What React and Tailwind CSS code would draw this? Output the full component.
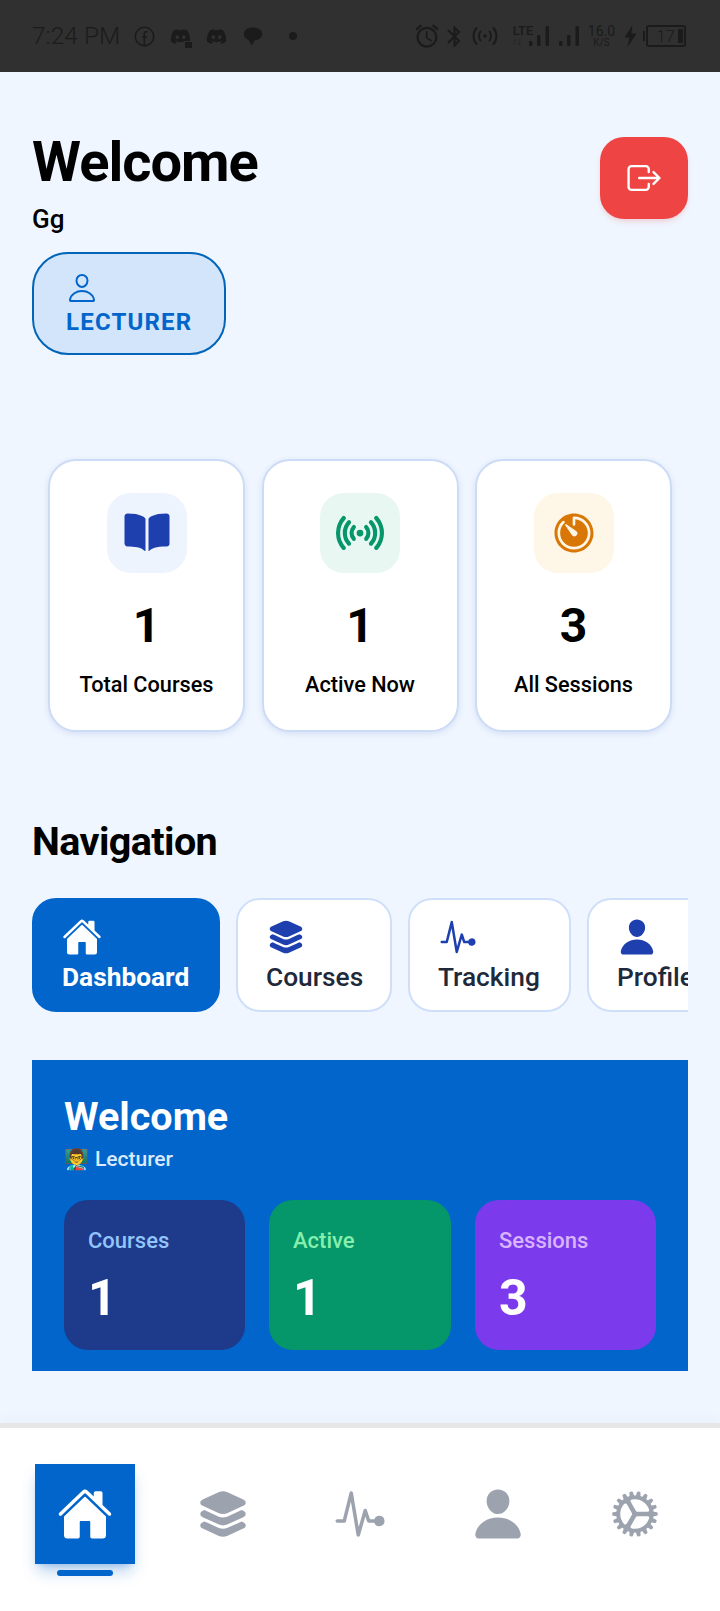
import React from 'react';
import {
  IoBook,
  IoCog,
  IoExitOutline,
  IoHome,
  IoLayers,
  IoPerson,
  IoPersonOutline,
  IoPulse,
  IoRadio,
  IoTimer,
} from 'react-icons/io5';
import { FaDiscord } from 'react-icons/fa';
import { MdAccessAlarm, MdBluetooth } from 'react-icons/md';

const stats = [
  { label: 'Total Courses', value: '1', Icon: IoBook, box: 'bg-[#eef4fe]', tint: 'text-[#1e40af]' },
  { label: 'Active Now', value: '1', Icon: IoRadio, box: 'bg-[#e8f7f1]', tint: 'text-[#059669]' },
  { label: 'All Sessions', value: '3', Icon: IoTimer, box: 'bg-[#fef6e7]', tint: 'text-[#d97706]' },
];

const tabs = [
  { label: 'Dashboard', Icon: IoHome, width: 'w-[188px]', active: true },
  { label: 'Courses', Icon: IoLayers, width: 'w-[156px]' },
  { label: 'Tracking', Icon: IoPulse, width: 'w-[163px]' },
  { label: 'Profile', Icon: IoPerson, width: 'w-[160px]' },
];

const summary = [
  { label: 'Courses', value: '1', bg: 'bg-[#1e3a8a]', tint: 'text-[#93c5fd]', width: 'w-[181px]' },
  { label: 'Active', value: '1', bg: 'bg-[#059669]', tint: 'text-[#86efac]', width: 'w-[182px]' },
  { label: 'Sessions', value: '3', bg: 'bg-[#7c3aed]', tint: 'text-[#d8b4fe]', width: 'w-[181px]' },
];

const bottomNav = [IoHome, IoLayers, IoPulse, IoPerson, IoCog];

function SignalBars({ className }) {
  return (
    <svg viewBox="0 0 22 22" className={className} fill="#1b1b1b">
      <rect x="1" y="16" width="3.500" height="5" rx="1" />
      <rect x="9" y="10" width="3.500" height="11" rx="1" />
      <rect x="17.500" y="1" width="3.500" height="20" rx="1" />
    </svg>
  );
}

function HotspotIcon({ className }) {
  return (
    <svg viewBox="0 0 26 22" className={className} fill="none" stroke="#1b1b1b" strokeWidth="2" strokeLinecap="round">
      <circle cx="13" cy="11" r="1.800" fill="#1b1b1b" stroke="none" />
      <path d="M8.500 6.500c-2 2.500-2 6.500 0 9M17.500 6.500c2 2.500 2 6.500 0 9" />
      <path d="M4.500 3c-4 4.500-4 11.500 0 16M21.500 3c4 4.500 4 11.500 0 16" />
    </svg>
  );
}

function StatusBar() {
  return (
    <div className="h-[72px] bg-[#303030] flex items-center justify-between pl-[32px] pr-[34px] text-[#1b1b1b]">
      <div className="flex items-center">
        <span className="text-[24.5px] font-light w-[85px] whitespace-nowrap">7:24 PM</span>
        <svg viewBox="0 0 20 20" className="w-[21px] h-[21px] ml-[17px]" fill="none" stroke="#1b1b1b" strokeWidth="1.500">
          <circle cx="10" cy="10" r="8.800" />
          <path d="M13 5.500h-1.600c-1 0-1.600.7-1.600 1.800v11M7.500 10.500h5" />
        </svg>
        <span className="relative ml-[15px]">
          <FaDiscord className="w-[21px] h-[21px]" />
          <span className="absolute right-[-2px] bottom-[-2px] w-[9px] h-[8px] bg-[#1b1b1b] border border-[#303030]" />
        </span>
        <FaDiscord className="w-[21px] h-[21px] ml-[15px]" />
        <svg viewBox="0 0 20 20" className="w-[20px] h-[21px] ml-[16px]" fill="#1b1b1b">
          <path d="M9.500 1C4.500 1 .8 3.600.8 7.600c0 2.800 2 5 4.700 6L9 19l2.500-5c4.500-.6 7.700-2.900 7.700-6.500C19.200 3.600 15 1 9.500 1z" />
        </svg>
        <span className="w-[8px] h-[8px] rounded-full bg-[#1b1b1b] ml-[26px]" />
      </div>
      <div className="flex items-center">
        <MdAccessAlarm className="w-[28px] h-[28px] shrink-0" />
        <MdBluetooth className="w-[25px] h-[27px] ml-[1px] shrink-0" />
        <HotspotIcon className="w-[26px] h-[22px] ml-[5px] shrink-0" />
        <div className="w-[22px] ml-[14px] flex flex-col items-center">
          <span className="text-[13px] font-medium leading-[12px]">LTE</span>
          <span className="text-[10px] font-bold leading-[10px] self-start">↑↓</span>
        </div>
        <SignalBars className="w-[22px] h-[22px] -ml-[6px] shrink-0" />
        <SignalBars className="w-[22px] h-[22px] ml-[8px] shrink-0" />
        <div className="w-[25px] ml-[9px] flex flex-col items-center">
          <span className="text-[14px] leading-[13px]">16.0</span>
          <span className="text-[10px] leading-[10px]">K/S</span>
        </div>
        <svg viewBox="0 0 14 22" className="w-[15px] h-[22px] ml-[9px] mr-[4px] shrink-0" fill="#1b1b1b">
          <path d="M9 0 1 12.500h5L4 22l9-13.500H8z" />
        </svg>
        <div className="w-[2px] h-[10px] bg-[#1b1b1b] ml-[1px]" />
        <div className="w-[40px] h-[22px] border-2 border-[#1b1b1b] rounded-[3px] flex items-center justify-end pr-[1px] ml-[1px]">
          <span className="text-[17px] font-light leading-none mr-[3px]">17</span>
          <span className="w-[5px] h-[14px] bg-[#1b1b1b]" />
        </div>
      </div>
    </div>
  );
}

function Header() {
  return (
    <div className="flex justify-between items-start">
      <div>
        <h1 className="text-[56px] font-bold leading-[60px] text-black tracking-[-1px]">Welcome</h1>
        <p className="text-[26px] font-medium leading-[30px] text-black mt-[12px]">Gg</p>
        <div className="mt-[18px] w-[194px] h-[103px] bg-[#d3e5fa] border-2 border-[#0265b8] rounded-[36px] pl-[32px] pt-[18px] text-[#0265cb]">
          <IoPersonOutline className="w-[32px] h-[32px]" />
          <div className="text-[24px] font-bold tracking-[1.2px] leading-[28px] mt-[4px]">LECTURER</div>
        </div>
      </div>
      <button className="mt-[5px] w-[88px] h-[82px] rounded-[24px] bg-[#ef4444] shadow-md shadow-[#ef4444]/15 flex items-center justify-center text-white">
        <IoExitOutline className="w-[38px] h-[38px]" />
      </button>
    </div>
  );
}

function StatCards() {
  return (
    <div className="mt-[104px] mx-[16px] flex justify-between">
      {stats.map(({ label, value, Icon, box, tint }) => (
        <div
          key={label}
          className="w-[197px] h-[273px] bg-white border-2 border-[#cddcf6] rounded-[28px] shadow-[0_2px_6px_rgba(30,64,175,0.12)] flex flex-col items-center pt-[32px]"
        >
          <div className={`w-[80px] h-[80px] rounded-[24px] flex items-center justify-center ${box}`}>
            <Icon className={`w-[48px] h-[48px] ${tint}`} />
          </div>
          <div className="text-[48px] font-bold leading-[56px] text-black mt-[25px]">{value}</div>
          <div className="text-[21.7px] font-medium leading-[28px] text-black mt-[17px]">{label}</div>
        </div>
      ))}
    </div>
  );
}

function Navigation() {
  return (
    <div className="mt-[88px]">
      <h2 className="text-[39.5px] font-bold leading-[44px] text-black tracking-[-0.6px]">Navigation</h2>
      <div className="mt-[34px] flex gap-[16px] overflow-hidden">
        {tabs.map(({ label, Icon, width, active }) => (
          <div
            key={label}
            className={`shrink-0 h-[114px] rounded-[24px] border-2 pl-[28px] pt-[17px] ${width} ${
              active ? 'bg-[#0265cb] border-[#0265cb] text-white' : 'bg-white border-[#cfdffa] text-[#1e293b]'
            }`}
          >
            <Icon className={`w-[40px] h-[40px] ${active ? 'text-white' : 'text-[#1e40af]'}`} />
            <div className={`text-[26.3px] leading-[32px] mt-[4px] ${active ? 'font-bold' : 'font-medium'}`}>{label}</div>
          </div>
        ))}
      </div>
    </div>
  );
}

function WelcomePanel() {
  return (
    <div className="mt-[48px] h-[311px] bg-[#0265cb] px-[32px] pt-[34px]">
      <h3 className="text-[39.5px] font-bold leading-[46px] text-white">Welcome</h3>
      <p className="text-[21px] font-medium leading-[26px] text-[#dbeafe] mt-[6px] flex items-center gap-[6px]">
        <span className="text-[20px]" style={{ fontFamily: '"Noto Color Emoji", sans-serif' }}>👨‍🏫</span>
        Lecturer
      </p>
      <div className="mt-[28px] flex justify-between">
        {summary.map(({ label, value, bg, tint, width }) => (
          <div key={label} className={`h-[150px] rounded-[24px] pl-[24px] pt-[27px] ${bg} ${width}`}>
            <div className={`text-[22px] font-medium leading-[28px] ${tint}`}>{label}</div>
            <div className="text-[50px] font-bold leading-[56px] text-white mt-[15px]">{value}</div>
          </div>
        ))}
      </div>
    </div>
  );
}

function BottomNav() {
  return (
    <div className="mt-[52px] h-[210px] bg-white border-t-[5px] border-[#e6e6e6] shadow-[0_-6px_12px_rgba(0,0,0,0.02)] px-[35px] flex justify-between items-start">
      {bottomNav.map((Icon, i) => (
        <div key={i} className="w-[100px] pt-[36px] flex flex-col items-center">
          <div
            className={`w-[100px] h-[100px] flex items-center justify-center ${
              i === 0 ? 'bg-[#0265cb] text-white shadow-lg shadow-[#0265cb]/30' : 'text-[#9ca3af]'
            }`}
          >
            <Icon className="w-[56px] h-[56px]" />
          </div>
          {i === 0 && <div className="w-[56px] h-[6px] rounded-full bg-[#0265cb] mt-[6px]" />}
        </div>
      ))}
    </div>
  );
}

export default function App() {
  return (
    <div className="h-[1611px] overflow-hidden bg-[#eff6ff] font-['Roboto',sans-serif]">
      <StatusBar />
      <div className="px-[32px] pt-[60px]">
        <Header />
        <StatCards />
        <Navigation />
        <WelcomePanel />
      </div>
      <BottomNav />
    </div>
  );
}
